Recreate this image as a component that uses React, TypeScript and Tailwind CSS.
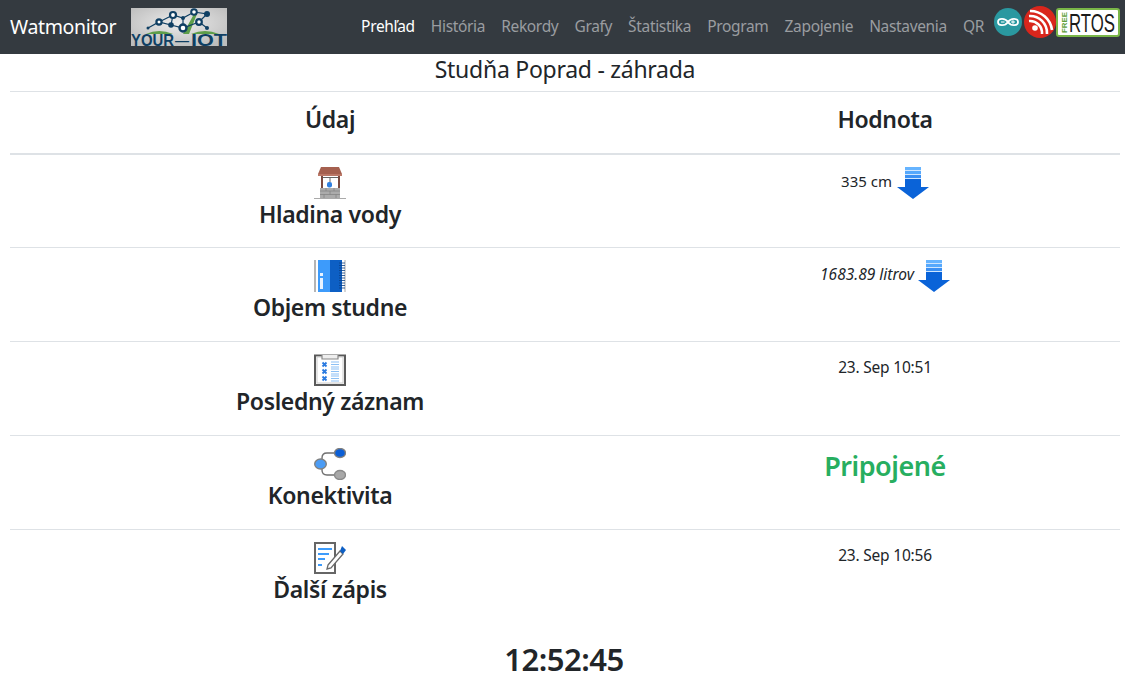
import React from 'react'

const WellIcon = () => (
  <svg width="32" height="32" viewBox="0 0 32 32">
    <path d="M4 7 L7 0 H25 L28 7 Z" fill="#a5604f" />
    <rect x="4" y="7" width="24" height="2" fill="#bb7766" />
    <rect x="7" y="9" width="2" height="12" fill="#7a4a40" />
    <rect x="24" y="9" width="2" height="12" fill="#7a4a40" />
    <rect x="9" y="10" width="15" height="1" fill="#666" />
    <rect x="15.500" y="11" width="1" height="4" fill="#666" />
    <rect x="13" y="15" width="5" height="5.500" rx="2" fill="#2f80e0" />
    <rect x="6" y="21" width="20" height="10" fill="#ababab" />
    <path d="M6 24 H26 M6 27.500 H26 M12 21 V24 M20 21 V24 M16 24 V27.500 M10 27.500 V31 M22 27.500 V31" stroke="#858585" strokeWidth="0.8" />
    <rect x="0" y="31" width="32" height="1" fill="#aaa" />
  </svg>
)

const BookIcon = () => (
  <svg width="32" height="32" viewBox="0 0 32 32">
    <rect x="0" y="0" width="2" height="32" fill="#b5b5b5" />
    <rect x="30" y="0" width="2" height="32" fill="#d5d5d5" />
    <rect x="4" y="0" width="12" height="32" fill="#3d9bfb" />
    <rect x="16" y="0" width="12" height="32" fill="#0d5fc4" />
    <rect x="6" y="13" width="3" height="3" fill="#e8f3ff" />
    <rect x="6" y="18" width="3" height="11" fill="#e8f3ff" />
    <path d="M25 3H31M25 5.500H31M25 8H31M25 10.500H31M25 13H31M25 15.500H31M25 18H31M25 20.500H31M25 23H31M25 25.500H31M25 28H31" stroke="#0a3f85" strokeWidth="0.8" />
  </svg>
)

const ChecklistIcon = () => (
  <svg width="32" height="32" viewBox="0 0 32 32">
    <rect x="1" y="1.500" width="30" height="29.500" fill="#fafafa" stroke="#5a5a5a" strokeWidth="2" />
    <rect x="3" y="3" width="26" height="26" fill="#fff" stroke="#ccc" strokeWidth="1" />
    <path d="M8 1 V5 H24 V1" fill="#eee" stroke="#888" strokeWidth="1.200" />
    <path d="M8.500 8.500l4 4m0-4l-4 4M8.500 15.500l4 4m0-4l-4 4M8.500 22.500l4 4m0-4l-4 4" stroke="#2a7ae0" strokeWidth="1.800" />
    <path d="M17 8H25M17 10.500H25M17 13H25M17 15H25M17 17.500H25M17 20H25M17 22H25M17 24.500H25M17 27H25" stroke="#8cc0f5" strokeWidth="1.100" />
  </svg>
)

const NodesIcon = () => (
  <svg width="32" height="32" viewBox="0 0 32 32">
    <path d="M25 5 H13 Q8 5 8 10 V11 M8 21 V22 Q8 27 13 27 H25" fill="none" stroke="#707070" strokeWidth="1.400" />
    <ellipse cx="26" cy="5" rx="5.500" ry="4.500" fill="#0c5fd6" stroke="#808080" strokeWidth="1.400" />
    <ellipse cx="6.500" cy="16" rx="5.800" ry="5" fill="#4b9cf5" stroke="#808080" strokeWidth="1.400" />
    <ellipse cx="26" cy="27" rx="5.500" ry="4.500" fill="#a8a8a8" stroke="#8a8a8a" strokeWidth="1.400" />
  </svg>
)

const NoteIcon = () => (
  <svg width="32" height="32" viewBox="0 0 32 32">
    <rect x="1" y="1" width="20" height="30" fill="#fff" stroke="#666" strokeWidth="2" />
    <path d="M4 7H18M4 12H15M4 17H11M4 23H8" stroke="#3d9bfb" strokeWidth="1.800" />
    <path d="M14 23 L26 9 L29 12 L17 26 L13 27 Z" fill="#fff" stroke="#6a6a6a" strokeWidth="1.300" />
    <path d="M26 9 L28 4 L32 8 L29 12 Z" fill="#0d5fc4" />
  </svg>
)

const ArrowDown = () => (
  <svg width="32" height="32" viewBox="0 0 32 32">
    <rect x="8" y="0" width="16" height="12" fill="#cfe6ff" />
    <rect x="8" y="0" width="16" height="3" fill="#66b4ff" />
    <rect x="8" y="4" width="16" height="3" fill="#55a8fc" />
    <rect x="8" y="8" width="16" height="3" fill="#3b90f3" />
    <path d="M8 12 H24 V20 H32 L16 32 L0 20 H8 Z" fill="#0a63d8" />
  </svg>
)

const ArduinoLogo = () => (
  <svg width="28" height="28" viewBox="0 0 28 28">
    <circle cx="14" cy="14" r="14" fill="#2a98a0" />
    <path d="M14 14 C11 9.500 4 10 4 14 C4 18 11 18.500 14 14 C17 9.500 24 10 24 14 C24 18 17 18.500 14 14 Z" fill="none" stroke="#fff" strokeWidth="1.800" />
    <path d="M7 14H10.500M17 14H21M19 12.300V15.700" stroke="#fff" strokeWidth="1.100" />
  </svg>
)

const EspLogo = () => (
  <svg width="32" height="32" viewBox="0 0 32 32">
    <circle cx="16" cy="16" r="16" fill="#d9261c" />
    <circle cx="11" cy="22" r="2.800" fill="#fff" />
    <path d="M5 15 A12 12 0 0 1 18 28 M5 10 A17 17 0 0 1 23 28 M6 5 A22 22 0 0 1 28 24" fill="none" stroke="#fff" strokeWidth="2.600" />
  </svg>
)

const YourIotLogo = () => (
  <svg width="96" height="38" viewBox="0 0 96 38" className="overflow-visible font-['Liberation_Sans',sans-serif]">
    <defs>
      <radialGradient id="logoBg" cx="50%" cy="40%" r="65%">
        <stop offset="0%" stopColor="#ececec" />
        <stop offset="100%" stopColor="#bdbdbd" />
      </radialGradient>
    </defs>
    <rect width="96" height="38" fill="url(#logoBg)" />
    <path d="M15 26 Q28 20 42 26 Z" fill="#5e9e4a" />
    <path d="M52 26 L63 6 L66 6 L58 26 Z M60 26 Q74 20 88 26 Z" fill="#5e9e4a" />
    <path d="M17 20 L28 14 L40 17 L42 7 L52 10 L63 4 L76 6 L68 14 L76 20 M40 17 L52 20 L68 14 M52 10 L52 20 M28 14 L42 7" fill="none" stroke="#0f3f63" strokeWidth="1.200" />
    <circle cx="28" cy="14" r="2.600" fill="#fff" stroke="#0f3f63" strokeWidth="2.200" />
    <circle cx="40" cy="17" r="2.800" fill="#0f3f63" />
    <circle cx="42" cy="7" r="3" fill="#fff" stroke="#0f3f63" strokeWidth="2.200" />
    <circle cx="52" cy="10" r="2" fill="#0f3f63" />
    <circle cx="52" cy="20" r="3.500" fill="#fff" stroke="#0f3f63" strokeWidth="2.400" />
    <circle cx="63" cy="4" r="2.800" fill="#fff" stroke="#0f3f63" strokeWidth="2" />
    <circle cx="68" cy="14" r="2.800" fill="#fff" stroke="#0f3f63" strokeWidth="2.200" />
    <circle cx="76" cy="6" r="3" fill="#0f3f63" />
    <circle cx="76" cy="20" r="2" fill="#0f3f63" />
    <circle cx="17" cy="20" r="1.500" fill="#0f3f63" />
    <text y="38" fontSize="16.500" fontWeight="700" fill="#0f3f63">
      <tspan x="0" textLength="43" lengthAdjust="spacingAndGlyphs">YOUR</tspan>
      <tspan x="44" textLength="14" lengthAdjust="spacingAndGlyphs" fontWeight="400">—</tspan>
      <tspan x="60" textLength="36" lengthAdjust="spacingAndGlyphs">IOT</tspan>
    </text>
  </svg>
)

const FreeRtosLogo = () => (
  <svg width="64" height="29" viewBox="0 0 64 29" className="overflow-visible font-['Liberation_Sans',sans-serif]">
    <rect x="1" y="1" width="62" height="27" rx="2" fill="#fff" stroke="#7ab648" strokeWidth="2" />
    <text x="0" y="0" transform="translate(10.500 25) rotate(-90)" fontSize="8" fontWeight="700" fill="#5fa03a" textLength="21" lengthAdjust="spacingAndGlyphs">FREE</text>
    <text x="13" y="24" fontSize="25" fill="#1a1a1a" textLength="46" lengthAdjust="spacingAndGlyphs">RTOS</text>
  </svg>
)

const links = ['Prehľad', 'História', 'Rekordy', 'Grafy', 'Štatistika', 'Program', 'Zapojenie', 'Nastavenia', 'QR']

const Row = ({ icon, label, first, children }: { icon: React.ReactNode; label: string; first?: boolean; children: React.ReactNode }) => (
  <div className={first ? 'grid grid-cols-[640px_470px] h-[92px]' : 'grid grid-cols-[640px_470px] h-[94px] border-t border-[#dee2e6]'}>
    <div className="flex flex-col items-center pt-[12px]">
      <div className="h-[32px]">{icon}</div>
      <div className="text-[23px] leading-[29px] tracking-[-0.35px] font-semibold text-[#212529] mt-[1px]">{label}</div>
    </div>
    <div className="flex justify-center items-start pt-[12px]">{children}</div>
  </div>
)

const App = () => {
  return (
    <div className="h-[675px] overflow-hidden bg-white font-['Noto_Sans',sans-serif] text-[#212529]">
      <nav className="h-[54px] bg-[#343a40] flex items-center pl-[10px] pr-[5px]">
        <span className="text-[19.5px] tracking-[-0.35px] text-white">Watmonitor</span>
        <div className="ml-[15px]"><YourIotLogo /></div>
        <div className="ml-auto flex items-center">
          {links.map((l, i) => (
            <a key={l} className={i === 0 ? 'px-[8px] text-[15.5px] tracking-[-0.33px] text-white' : 'px-[8px] text-[15.5px] tracking-[-0.33px] text-[#9a9da0]'}>{l}</a>
          ))}
          <div className="flex items-center ml-[2px] mb-[10px]">
            <div className="mr-[2px] flex"><ArduinoLogo /></div>
            <EspLogo />
            <FreeRtosLogo />
          </div>
        </div>
      </nav>
      <div className="text-center text-[23px] tracking-[-0.27px] leading-[30px] h-[37px] w-[1130px]">Studňa Poprad - záhrada</div>
      <div className="ml-[10px] mr-[5px]">
        <div className="grid grid-cols-[640px_470px] h-[64px] pb-[7px] items-center border-t border-[#dee2e6] border-b-2 text-[23px] tracking-[-0.35px] font-semibold">
          <div className="text-center">Údaj</div>
          <div className="text-center">Hodnota</div>
        </div>
        <Row first icon={<WellIcon />} label="Hladina vody">
          <span className="text-[15px] leading-[24px] mr-[5px] mt-[2px]">335 cm</span>
          <ArrowDown />
        </Row>
        <Row icon={<BookIcon />} label="Objem studne">
          <span className="text-[15.5px] leading-[24px] italic mr-[4px] mt-[2px]">1683.89 litrov</span>
          <ArrowDown />
        </Row>
        <Row icon={<ChecklistIcon />} label="Posledný záznam">
          <span className="text-[15.5px] tracking-[-0.2px] leading-[24px] mt-[1px]">23. Sep 10:51</span>
        </Row>
        <Row icon={<NodesIcon />} label="Konektivita">
          <span className="text-[27px] tracking-[-0.5px] leading-[34px] font-semibold text-[#27ae60] mt-[1px]">Pripojené</span>
        </Row>
        <Row icon={<NoteIcon />} label="Ďalší zápis">
          <span className="text-[15.5px] tracking-[-0.2px] leading-[24px] mt-[1px]">23. Sep 10:56</span>
        </Row>
      </div>
      <div className="text-center text-[31px] tracking-[-0.5px] leading-[28px] font-semibold mt-[22px] w-[1128px]">12:52:45</div>
    </div>
  )
}

export default App
